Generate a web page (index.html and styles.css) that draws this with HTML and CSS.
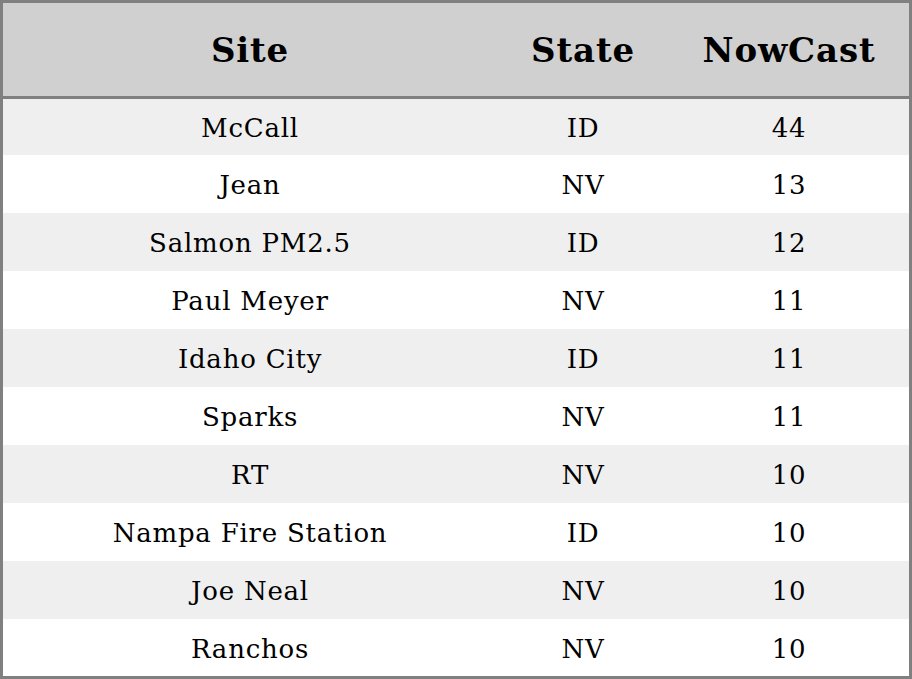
FILE: index.html
```html
<!DOCTYPE html>
<html>
<head>
<meta charset="utf-8">
<link rel="stylesheet" href="styles.css">
</head>
<body>
<table class="aq">
  <thead>
    <tr><th class="c-site">Site</th><th class="c-state">State</th><th class="c-now">NowCast</th></tr>
  </thead>
  <tbody>
    <tr><td>McCall</td><td>ID</td><td>44</td></tr>
    <tr><td>Jean</td><td>NV</td><td>13</td></tr>
    <tr><td>Salmon PM2.5</td><td>ID</td><td>12</td></tr>
    <tr><td>Paul Meyer</td><td>NV</td><td>11</td></tr>
    <tr><td>Idaho City</td><td>ID</td><td>11</td></tr>
    <tr><td>Sparks</td><td>NV</td><td>11</td></tr>
    <tr><td>RT</td><td>NV</td><td>10</td></tr>
    <tr><td>Nampa Fire Station</td><td>ID</td><td>10</td></tr>
    <tr><td>Joe Neal</td><td>NV</td><td>10</td></tr>
    <tr><td>Ranchos</td><td>NV</td><td>10</td></tr>
  </tbody>
</table>
</body>
</html>
```
FILE: styles.css
```css
html, body {
  margin: 0;
  padding: 0;
  background: #ffffff;
}
.aq {
  width: 912px;
  border-collapse: separate;
  border-spacing: 0;
  border: 3px solid #808080;
  font-family: "DejaVu Serif", serif;
  color: #000;
  table-layout: fixed;
}
.aq th {
  background: #d0d0d0;
  font-size: 34px;
  font-weight: bold;
  height: 93px;
  padding: 0;
  text-align: center;
  vertical-align: middle;
  border-bottom: 3px solid #808080;
  letter-spacing: 0.025em;
  box-sizing: content-box;
}
.aq td {
  font-size: 26px;
  height: 56px;
  padding: 2px 0 0;
  text-align: center;
  vertical-align: middle;
  letter-spacing: 0.03em;
  line-height: 1;
}
.aq tbody tr:first-child td { height: 54px; }
.aq tbody tr:last-child td { height: 55px; }
.aq tbody tr:nth-child(odd) td {
  background: #efefef;
}
.c-site { width: 494px; }
.c-state { width: 172px; }
.c-now { width: 240px; }
```
